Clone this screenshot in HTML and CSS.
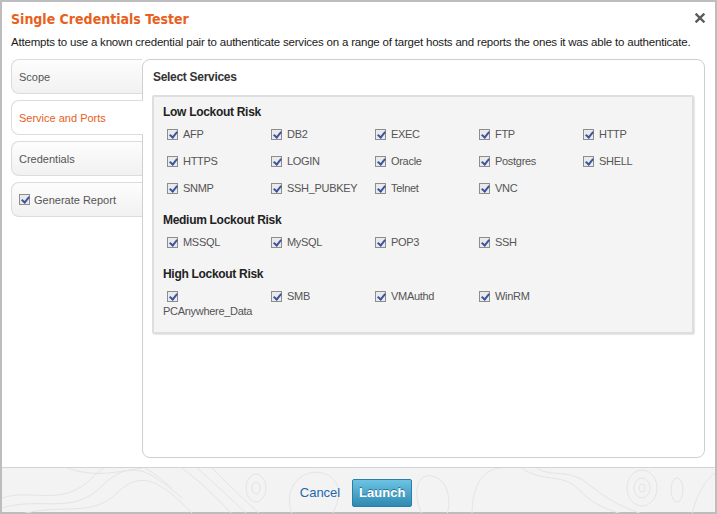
FILE: index.html
```html
<!DOCTYPE html>
<html lang="en">
  <head>
    <meta charset="UTF-8" />
    <title>Single Credentials Tester</title>
    <link rel="stylesheet" href="styles.css">
  </head>
  <body>
    <div class="dialog">
      <div class="dialog-header">
        <div class="title-row">
          <h1 class="title">Single Credentials Tester</h1>
          <button class="close" title="Close">
            <svg width="10" height="10" viewBox="0 0 10 10"><path d="M1.5 1.5 L8.5 8.5 M8.5 1.5 L1.5 8.5" stroke="#5a5a5a" stroke-width="2.4" stroke-linecap="square"/></svg>
          </button>
        </div>
        <p class="desc">Attempts to use a known credential pair to authenticate services on a range of target hosts and reports the ones it was able to authenticate.</p>
      </div>

      <div class="dialog-body">
        <ul class="tabs">
          <li class="tab">Scope</li>
          <li class="tab active">Service and Ports</li>
          <li class="tab">Credentials</li>
          <li class="tab"><span class="cb"></span>Generate Report</li>
        </ul>

        <div class="panel">
          <h2 class="panel-title">Select Services</h2>
          <div class="services" id="services"></div>
        </div>
      </div>

      <div class="dialog-footer">
        <svg class="topo" width="713" height="45" viewBox="0 0 713 45" preserveAspectRatio="none">
          <g fill="none" stroke="#e4e4e4" stroke-width="1">
            <path d="M0 30 C30 20 60 40 90 10 S140 -5 170 20"/>
            <path d="M0 40 C40 28 70 48 100 18 S150 5 180 30"/>
            <path d="M20 46 C60 35 90 50 115 25 S160 15 190 45"/>
            <path d="M60 -2 C90 10 110 5 140 0"/>
            <path d="M180 0 C200 15 215 30 230 46"/>
            <path d="M195 0 C212 15 228 30 245 46"/>
            <path d="M210 0 C225 15 240 30 258 46"/>
            <ellipse cx="254" cy="20" rx="10" ry="14"/>
            <ellipse cx="254" cy="20" rx="4" ry="6"/>
            <path d="M290 46 C280 20 300 0 320 5 S340 30 330 46"/>
            <path d="M420 46 C410 25 415 5 430 8 S450 30 445 46"/>
            <path d="M470 46 C470 20 480 0 500 0"/>
            <path d="M520 0 C540 15 560 5 575 20 S600 40 620 46"/>
            <path d="M535 0 C550 10 565 0 585 15 S610 35 640 46"/>
            <ellipse cx="640" cy="20" rx="15" ry="18"/>
            <ellipse cx="640" cy="20" rx="8" ry="10"/>
            <ellipse cx="640" cy="20" rx="3" ry="4"/>
            <ellipse cx="675" cy="22" rx="6" ry="12"/>
            <path d="M690 46 C695 25 705 10 713 5"/>
          </g>
        </svg>
        <a class="cancel" href="#">Cancel</a>
        <button class="launch">Launch</button>
      </div>
    </div>

    <script>
      const groups = [
        { name: "Low Lockout Risk", items: ["AFP", "DB2", "EXEC", "FTP", "HTTP", "HTTPS", "LOGIN", "Oracle", "Postgres", "SHELL", "SNMP", "SSH_PUBKEY", "Telnet", "VNC"] },
        { name: "Medium Lockout Risk", items: ["MSSQL", "MySQL", "POP3", "SSH"] },
        { name: "High Lockout Risk", items: ["PCAnywhere_Data", "SMB", "VMAuthd", "WinRM"] }
      ];

      const services = document.getElementById("services");
      groups.forEach((group) => {
        const h = document.createElement("h3");
        h.className = "group-title";
        h.textContent = group.name;
        services.appendChild(h);

        const grid = document.createElement("div");
        grid.className = "group-grid";
        group.items.forEach((item) => {
          const el = document.createElement("div");
          el.className = "service";
          el.innerHTML = '<span class="cb"></span>' + item;
          grid.appendChild(el);
        });
        services.appendChild(grid);
      });
    </script>
  </body>
</html>
```

FILE: styles.css
```css
* {
  margin: 0;
  padding: 0;
  box-sizing: border-box;
}
body {
  font-family: "Liberation Sans", Arial, sans-serif;
  background: #fff;
}
.dialog {
  width: 717px;
  height: 514px;
  border: 2px solid #bdbdbd;
  background: #fff;
  display: flex;
  flex-direction: column;
}
.dialog-header {
  padding: 7px 9px 0 9px;
}
.title-row {
  display: flex;
  justify-content: space-between;
  align-items: flex-start;
}
.title {
  font-family: "DejaVu Sans Condensed", "DejaVu Sans", sans-serif;
  font-size: 14px;
  font-weight: bold;
  color: #e8601c;
  line-height: 20px;
}
.close {
  border: none;
  background: none;
  margin: 2px 1px 0 0;
  cursor: pointer;
}
.desc {
  font-size: 11.5px;
  letter-spacing: -0.2px;
  color: #1a1a1a;
  line-height: 16px;
  margin-top: 5px;
}
.dialog-body {
  display: flex;
  padding: 0 11px 0 9px;
  margin-top: 9px;
  height: 399px;
}
.tabs {
  list-style: none;
  width: 131px;
  flex-shrink: 0;
}
.tab {
  position: relative;
  height: 35px;
  margin-bottom: 6px;
  padding-left: 7px;
  display: flex;
  align-items: center;
  font-size: 11px;
  color: #555;
  border: 1px solid #dcdcdc;
  border-right: none;
  border-radius: 8px 0 0 8px;
  background: linear-gradient(#fdfdfd, #f1f1f1);
  cursor: pointer;
}
.tab.active {
  background: #fff;
  color: #e8601c;
  margin-right: -1px;
  z-index: 2;
}
.tab .cb {
  margin-right: 4px;
}
.panel {
  flex: 1;
  border: 1px solid #cfcfcf;
  border-radius: 8px;
  padding: 10px 10px 0 9px;
  background: #fff;
  z-index: 1;
}
.panel-title {
  font-size: 12px;
  letter-spacing: -0.3px;
  font-weight: bold;
  color: #333;
  line-height: 14px;
  margin: 0 0 11px 1px;
}
.services {
  background: #f4f4f4;
  border: 2px solid #dedede;
  border-radius: 2px;
  box-shadow: 1px 1px 1px #e6e6e6;
  padding: 7px 9px 7px 9px;
}
.group-title {
  font-size: 12px;
  letter-spacing: -0.3px;
  font-weight: bold;
  color: #222;
  line-height: 17px;
}
.group-grid {
  display: grid;
  grid-template-columns: repeat(5, 104px);
  margin-bottom: 10px;
}
.group-grid:last-child {
  margin-bottom: 0;
}
.service {
  font-size: 11px;
  letter-spacing: -0.3px;
  color: #555;
  line-height: 15px;
  padding: 6px 8px 6px 0;
}
.cb {
  display: inline-block;
  width: 11px;
  height: 11px;
  border: 1px solid #8d8d8d;
  background: #eaeaea;
  vertical-align: -2px;
  position: relative;
}
.cb::after {
  content: "";
  position: absolute;
  left: 3px;
  top: 0;
  width: 3px;
  height: 6px;
  border: solid #3e54a0;
  border-width: 0 2px 2px 0;
  transform: rotate(40deg);
}
.service .cb {
  margin: 0 5px 0 4px;
}
.dialog-footer {
  position: relative;
  margin-top: auto;
  height: 45px;
  border-top: 1px solid #d3d3d3;
  background: #f3f3f3;
  display: flex;
  justify-content: center;
  align-items: center;
  gap: 12px;
  padding-right: 5px;
}
.topo {
  position: absolute;
  left: 0;
  top: 0;
}
.cancel {
  position: relative;
  font-size: 13px;
  color: #2568ad;
  text-decoration: none;
  margin-top: 5px;
}
.launch {
  position: relative;
  width: 60px;
  height: 28px;
  margin-top: 5px;
  border: 1px solid #2b7ea6;
  border-radius: 2px;
  background: linear-gradient(#6cc3e3, #2f89b2);
  color: #fff;
  font-family: "Liberation Sans", Arial, sans-serif;
  font-size: 13px;
  font-weight: bold;
  text-shadow: 0 -1px 0 #27739a;
  cursor: pointer;
}
```
